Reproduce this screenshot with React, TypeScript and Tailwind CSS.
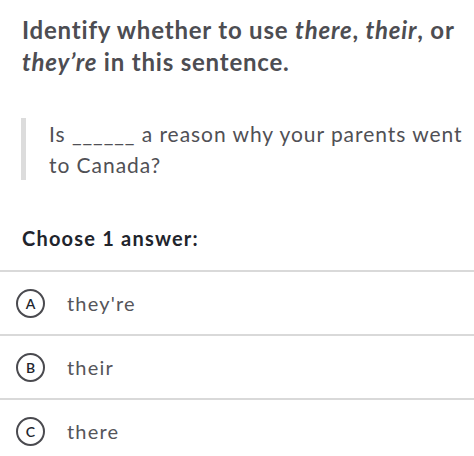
import React from "react";

const choices = [
    { letter: "A", text: "they're" },
    { letter: "B", text: "their" },
    { letter: "C", text: "there" },
];

const App = () => {
    return (
        <div className="w-[474px] h-[456px] bg-white overflow-hidden font-['Lato','Noto_Sans',sans-serif]">
            {/* Question */}
            <h1 className="pl-[22px] pr-[12px] pt-[14px] text-[24px] leading-[32px] font-bold tracking-[0.8px] text-[#4d4d52]">
                Identify whether to use <em>there</em>, <em>their</em>, or <em>they’re</em> in this sentence.
            </h1>

            {/* Quoted sentence */}
            <div className="mt-[40px] ml-[21px] border-l-[5px] border-[#dcdcdc] pl-[23px]">
                <p className="text-[21px] leading-[31px] tracking-[0.95px] text-[#505055]">
                    Is ______ a reason why your parents went to Canada?
                </p>
            </div>

            <h2 className="mt-[46px] px-[22px] text-[20px] leading-[24px] font-bold tracking-[1.2px] text-[#21242c]">
                Choose 1 answer:
            </h2>

            {/* Choices */}
            <ul className="mt-[20px]">
                {choices.map((c) => (
                    <li key={c.letter} className="h-[64px] border-t-2 border-[#d9d9d9] flex items-center pl-[16px]">
                        <span className="shrink-0 w-[29px] h-[29px] rounded-full border-2 border-[#4a4a4f] flex items-center justify-center text-[14px] font-semibold text-[#21242c]">
                            {c.letter}
                        </span>
                        <span className="ml-[22px] text-[20px] tracking-[1.2px] text-[#55555a]">{c.text}</span>
                    </li>
                ))}
            </ul>
        </div>
    );
};

export default App;
